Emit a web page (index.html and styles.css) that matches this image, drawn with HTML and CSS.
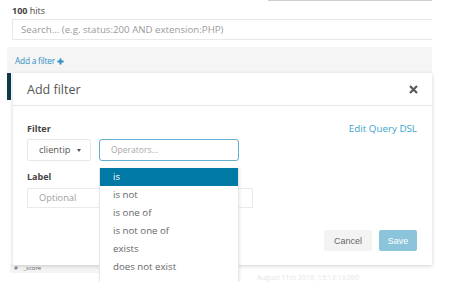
FILE: index.html
```html
<!DOCTYPE html>
<html>
<head>
    <title>Discover</title>
    <link rel="stylesheet" href="styles.css">
</head>
<body>
    <div class="page">
        <div class="top-line"></div>
        <div class="hits"><b>100</b> hits</div>
        <div class="search-box">Search... (e.g. status:200 AND extension:PHP)</div>
        <div class="filter-bar">
            <span class="add-filter">Add a filter
                <svg width="7" height="7" viewBox="0 0 8 8"><path d="M4 0.5v7M0.5 4h7" stroke="#2d8ec2" stroke-width="2.2"/></svg>
            </span>
        </div>
        <div class="results">
            <div class="doc-marker"></div>
            <div class="doc-spacer"></div>
            <div class="table-head"><span class="hash">#</span> _score</div>
            <div class="faint-row">August 11th 2016, 15:13:13.000</div>
        </div>

        <div class="modal">
            <div class="modal-head">
                <span class="modal-title">Add filter</span>
                <svg class="close" width="9" height="9" viewBox="0 0 9 9"><path d="M1 1l7 7M8 1l-7 7" stroke="#5a5a5a" stroke-width="2.2"/></svg>
            </div>
            <div class="modal-body">
                <div class="label-row">
                    <span class="field-label">Filter</span>
                    <span class="dsl-link">Edit Query DSL</span>
                </div>
                <div class="controls">
                    <div class="field-select">clientip <span class="caret"></span></div>
                    <div class="operator-wrap">
                        <div class="operator-input">Operators...</div>
                        <ul class="operator-menu">
                            <li class="active">is</li>
                            <li>is not</li>
                            <li>is one of</li>
                            <li>is not one of</li>
                            <li>exists</li>
                            <li>does not exist</li>
                        </ul>
                    </div>
                </div>
                <div class="field-label label-title">Label</div>
                <div class="label-input">Optional</div>
                <div class="actions">
                    <button class="btn cancel-btn">Cancel</button>
                    <button class="btn save-btn">Save</button>
                </div>
            </div>
        </div>
    </div>
</body>
</html>
```

FILE: styles.css
```css
* {
    margin: 0;
    padding: 0;
    box-sizing: border-box;
}
html, body {
    overflow: hidden;
    height: 100%;
}
body {
    font-family: 'Open Sans', 'Noto Sans', sans-serif;
    background: #fff;
    color: #333;
}
.page {
    position: relative;
    width: 449px;
    height: 282px;
    overflow: hidden;
}
.top-line {
    margin-left: 268px;
    width: 164px;
    height: 1px;
    background: #cfcfcf;
}
.hits {
    padding: 3px 0 0 12px;
    font-size: 9px;
    line-height: 13px;
    color: #444;
}
.hits b {
    font-weight: 700;
}
.search-box {
    margin: 2px 17px 0 12px;
    height: 21px;
    border: 1px solid #e8e8e8;
    border-right: none;
    padding-left: 8px;
    font-size: 9.7px;
    line-height: 19px;
    color: #9a9a9a;
}
.filter-bar {
    margin: 7px 17px 0 7px;
    height: 26px;
    background: #f5f5f5;
    padding-left: 8px;
}
.add-filter {
    display: inline-flex;
    align-items: center;
    gap: 2px;
    font-size: 8.3px;
    line-height: 26px;
    color: #2d8ec2;
    letter-spacing: -0.2px;
}
.results {
    margin-left: 7px;
}
.doc-marker {
    width: 4px;
    height: 27px;
    background: #0e3a4a;
}
.doc-spacer {
    height: 164px;
}
.table-head {
    width: 91px;
    height: 9px;
    margin-left: 3px;
    padding-left: 4px;
    background: #f4f4f4;
    font-size: 6px;
    line-height: 9px;
    color: #666;
}
.table-head .hash {
    margin-right: 4px;
}
.faint-row {
    margin: 1px 0 0 250px;
    font-size: 7px;
    color: #e6e6e6;
    line-height: 7px;
}

/* modal overlays the results table */
.modal {
    position: absolute;
    left: 13px;
    top: 73px;
    width: 419px;
    height: 192px;
    background: #fff;
    box-shadow: 0 1px 4px rgba(0,0,0,0.18);
}
.modal-head {
    height: 33px;
    border-bottom: 1px solid #e6e6e6;
    display: flex;
    align-items: center;
    justify-content: space-between;
    padding: 0 14px;
}
.modal-title {
    font-size: 12.5px;
    color: #555;
}
.modal-body {
    padding: 16px 15px 0 14px;
}
.label-row {
    display: flex;
    justify-content: space-between;
    align-items: center;
    height: 12px;
}
.field-label {
    font-size: 9px;
    font-weight: 700;
    color: #444;
}
.dsl-link {
    font-size: 9.8px;
    color: #3da3cc;
}
.controls {
    display: flex;
    gap: 8px;
    margin-top: 5px;
}
.field-select {
    width: 64px;
    height: 22px;
    border: 1px solid #e8e8e8;
    border-radius: 2px;
    font-size: 9.3px;
    line-height: 20px;
    color: #555;
    padding-left: 11px;
    display: flex;
    align-items: center;
}
.caret {
    margin-left: 7px;
    border-left: 2.5px solid transparent;
    border-right: 2.5px solid transparent;
    border-top: 3px solid #555;
}
.operator-wrap {
    position: relative;
}
.operator-input {
    width: 140px;
    height: 22px;
    border: 1px solid #64aed2;
    border-radius: 3px;
    font-size: 8.5px;
    line-height: 20px;
    color: #a8a8a8;
    padding-left: 11px;
}
.operator-menu {
    position: absolute;
    left: 0;
    top: 29px;
    width: 140px;
    list-style: none;
    background: #fff;
    border: 1px solid #e6e6e6;
    border-top: none;
    border-bottom: none;
    padding-bottom: 6px;
    box-shadow: 1px 0 3px rgba(0,0,0,0.08);
    z-index: 2;
}
.operator-menu li {
    height: 18px;
    font-size: 9.7px;
    line-height: 18px;
    padding-left: 13px;
    color: #666;
}
.operator-menu li.active {
    background: #0079a5;
    color: #fff;
}
.label-title {
    margin-top: 10px;
    line-height: 12px;
}
.label-input {
    margin-top: 5px;
    width: 226px;
    height: 20px;
    border: 1px solid #eaeaea;
    font-size: 9.3px;
    line-height: 18px;
    color: #a0a0a0;
    padding-left: 11px;
}
.actions {
    display: flex;
    justify-content: flex-end;
    gap: 7px;
    margin-top: 22px;
}
.btn {
    height: 21px;
    border: none;
    border-radius: 2px;
    font-family: 'Liberation Sans', Arial, sans-serif;
    font-size: 9px;
}
.cancel-btn {
    width: 48px;
    background: #f3f3f3;
    color: #666;
}
.save-btn {
    width: 38px;
    background: #8cc4dc;
    color: #fff;
}
```
